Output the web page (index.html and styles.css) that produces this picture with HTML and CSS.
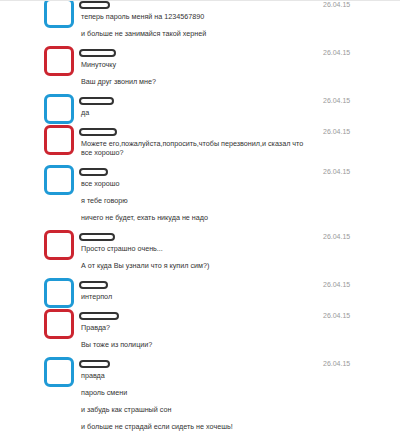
FILE: index.html
```html
<!DOCTYPE html>
<html lang="ru">
<head>
    <meta charset="UTF-8">
    <title>Диалог</title>
    <link rel="stylesheet" href="styles.css">
</head>
<body>

<main class="dialog">

    <div class="msg">
        <div class="ava blue"></div>
        <div class="body">
            <div class="name blue w31"></div>
            <p>теперь пароль меняй на 1234567890</p>
            <p>и больше не занимайся такой херней</p>
        </div>
        <div class="date">26.04.15</div>
    </div>

    <div class="msg">
        <div class="ava red"></div>
        <div class="body">
            <div class="name red w37"></div>
            <p>Минуточку</p>
            <p>Ваш друг звонил мне?</p>
        </div>
        <div class="date">26.04.15</div>
    </div>

    <div class="msg">
        <div class="ava blue"></div>
        <div class="body">
            <div class="name blue w35"></div>
            <p>да</p>
        </div>
        <div class="date">26.04.15</div>
    </div>

    <div class="msg">
        <div class="ava red"></div>
        <div class="body">
            <div class="name red w38"></div>
            <p>Можете его,пожалуйста,попросить,чтобы перезвонил,и сказал что все хорошо?</p>
        </div>
        <div class="date">26.04.15</div>
    </div>

    <div class="msg">
        <div class="ava blue"></div>
        <div class="body">
            <div class="name blue w29"></div>
            <p>все хорошо</p>
            <p>я тебе говорю</p>
            <p>ничего не будет, ехать никуда не надо</p>
        </div>
        <div class="date">26.04.15</div>
    </div>

    <div class="msg">
        <div class="ava red"></div>
        <div class="body">
            <div class="name red w36"></div>
            <p>Просто страшно очень...</p>
            <p>А от куда Вы узнали что я купил сим?)</p>
        </div>
        <div class="date">26.04.15</div>
    </div>

    <div class="msg">
        <div class="ava blue"></div>
        <div class="body">
            <div class="name blue w29"></div>
            <p>интерпол</p>
        </div>
        <div class="date">26.04.15</div>
    </div>

    <div class="msg">
        <div class="ava red"></div>
        <div class="body">
            <div class="name red w40"></div>
            <p>Правда?</p>
            <p>Вы тоже из полиции?</p>
        </div>
        <div class="date">26.04.15</div>
    </div>

    <div class="msg">
        <div class="ava blue"></div>
        <div class="body">
            <div class="name red w31"></div>
            <p>правда</p>
            <p>пароль смени</p>
            <p>и забудь как страшный сон</p>
            <p>и больше не страдай если сидеть не хочешь!</p>
        </div>
        <div class="date">26.04.15</div>
    </div>

</main>

</body>
</html>
```

FILE: styles.css
```css
body {
    margin: 0;
    background: #fff;
    font-family: "Liberation Sans", Arial, sans-serif;
    font-size: 7.2px;
    color: #333;
    border-top: 1px solid #e6e6e6;
}

.dialog {
    margin-top: -3px;
}

/* one message: avatar, name + text, date */
.msg {
    display: flex;
    align-items: flex-start;
}

.ava {
    box-sizing: border-box;
    width: 30px;
    height: 30px;
    margin-left: 44px;
    border: 3px solid;
    border-radius: 6px;
}

.blue {
    border-color: #1f9ad6;
}

.red {
    border-color: #cc2530;
}

.body {
    width: 233px;
    margin-left: 5px;
    padding-bottom: 8px;
}

.name {
    box-sizing: border-box;
    height: 8px;
    margin: 3px 0 3px;
    border: 2.5px solid;
    border-radius: 4px;
}

.w29 { width: 29px; }
.w31 { width: 31px; }
.w35 { width: 35px; }
.w36 { width: 36px; }
.w37 { width: 37px; }
.w38 { width: 38px; }
.w40 { width: 40px; }

.body p {
    margin: 8px 0 0 2px;
    line-height: 9px;
}

.body p:first-of-type {
    margin-top: 0;
}

.date {
    margin: 2px 0 0 11px;
    line-height: 9px;
    font-size: 7px;
    color: #9a9a9a;
}
```
